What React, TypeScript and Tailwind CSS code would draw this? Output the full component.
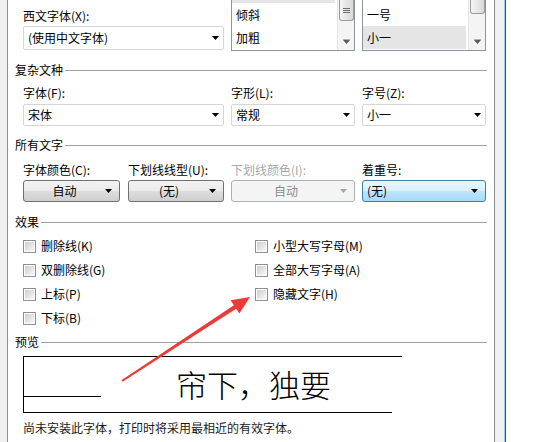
import React from "react";

function Caret({ color = "#000" }: { color?: string }) {
  return (
    <svg width="7" height="4" viewBox="0 0 7 4" className="shrink-0 block">
      <path d="M0 0H7L3.5 4Z" fill={color} />
    </svg>
  );
}

function Select({ text, tall }: { text: string; tall?: boolean }) {
  return (
    <div
      className={`${tall ? "h-[24px]" : "h-[22px]"} border border-[#d6d6d6] rounded-[2px] bg-white flex items-center justify-between pl-[4px] pr-[4px]`}
    >
      <span>{text}</span>
      <Caret />
    </div>
  );
}

function Header({ title }: { title: string }) {
  return (
    <div className="flex items-center h-[16px]">
      <span className="leading-[16px] text-black">{title}</span>
      <div className="flex-1 h-px bg-[#a0a0a0] ml-[2px]" />
    </div>
  );
}

function Check({ label }: { label: string }) {
  return (
    <div className="flex items-center h-[24px]">
      <div className="w-[13px] h-[13px] border border-[#8f8f8f] bg-white p-[1px] shrink-0">
        <div className="w-full h-full bg-linear-to-br from-[#cfcfcf] to-[#f7f7f7]" />
      </div>
      <span className="ml-[5px] leading-[16px]">{label}</span>
    </div>
  );
}

function Scrollbar({ thumb, grip }: { thumb: string; grip?: boolean }) {
  return (
    <div className="w-[17px] h-full bg-[#f4f4f4] border-l border-[#e6e6e6] flex flex-col items-center shrink-0">
      <div
        className={`${thumb} w-[15px] border border-t-0 border-[#9b9b9b] rounded-b-[3px] bg-linear-to-r from-[#f4f4f4] to-[#d9d9d9] flex flex-col items-center justify-center gap-[1px]`}
      >
        {grip && (
          <>
            <div className="w-[7px] h-px bg-[#6d6d6d]" />
            <div className="w-[7px] h-px bg-[#6d6d6d]" />
            <div className="w-[7px] h-px bg-[#6d6d6d]" />
          </>
        )}
      </div>
      <div className="flex-1" />
      <div className="h-[18px] flex items-center justify-center">
        <svg width="7" height="5" viewBox="0 0 7 5" className="block">
          <path d="M0 0H7V1H0Z" fill="#b0b0b0" />
          <path d="M0 1H7L3.5 5Z" fill="#5a5a5a" />
        </svg>
      </div>
    </div>
  );
}

function ListBox({
  items,
  selected,
  topSelected,
  thumb,
  grip,
}: {
  items: string[];
  selected: string;
  topSelected?: boolean;
  thumb: string;
  grip?: boolean;
}) {
  return (
    <div className="h-[51px] border-x border-b border-[#8f949c] flex overflow-hidden bg-white">
      <div className="flex-1 pr-[2px]">
        <div className={`h-[3px] ${topSelected ? "bg-[#e5e5e5]" : ""}`} />
        {items.map((it) => (
          <div
            key={it}
            className={`h-[23px] leading-[23px] pl-[4px] ${it === selected ? "bg-[#e5e5e5]" : ""}`}
          >
            {it}
          </div>
        ))}
      </div>
      <Scrollbar thumb={thumb} grip={grip} />
    </div>
  );
}

function DropButton({
  text,
  w,
  kind,
}: {
  text: string;
  w: string;
  kind: "normal" | "disabled" | "focus";
}) {
  if (kind === "disabled") {
    return (
      <div className={`${w} h-[22px] border border-[#adb2b5] rounded-[3px] bg-[#f4f4f4] flex items-center text-[#8a8a8a]`}>
        <span className="flex-1 text-center">{text}</span>
        <span className="mr-[7px]">
          <Caret color="#a6a6a6" />
        </span>
      </div>
    );
  }
  if (kind === "focus") {
    return (
      <div
        className={`${w} h-[22px] border border-[#3c7fb1] rounded-[3px] bg-[linear-gradient(#eaf6fd,#d9f0fc_50%,#bee6fd_50%,#a7d9f5)] flex items-center pl-[4px]`}
      >
        <span className="flex-1">{text}</span>
        <span className="mr-[7px]">
          <Caret />
        </span>
      </div>
    );
  }
  return (
    <div
      className={`${w} h-[22px] border border-[#707070] rounded-[3px] bg-[linear-gradient(#f2f2f2,#ebebeb_50%,#dddddd_50%,#cfcfcf)] flex items-center`}
    >
      <span className="flex-1 text-center">{text}</span>
      <span className="mr-[7px]">
        <Caret />
      </span>
    </div>
  );
}

export default function App() {
  return (
    <div className="relative w-[551px] h-[442px] overflow-hidden bg-white flex font-['Noto_Sans_CJK_SC','Noto_Sans',sans-serif] text-[12px] text-black">
      <div className="w-[7px] h-full bg-[#f0f0f0]" />
      <div className="w-px h-full bg-[#8e8f8f]" />

      <div className="w-[486px] h-full px-[7px] flex flex-col">
        {/* Row 1 */}
        <div className="pl-[8px] grid grid-cols-[201px_124px_124px] gap-x-[7px] h-[51px]">
          <div className="flex flex-col">
            <div className="mt-[8px] h-[16px] leading-[16px]">西文字体(X):</div>
            <div className="mt-[2px]">
              <Select text="(使用中文字体)" tall />
            </div>
          </div>
          <ListBox items={["倾斜", "加粗"]} selected="" topSelected thumb="h-[21px]" grip />
          <ListBox items={["一号", "小一"]} selected="小一" thumb="h-[14px]" />
        </div>

        {/* 复杂文种 */}
        <div className="mt-[11px]">
          <Header title="复杂文种" />
        </div>
        <div className="mt-[7px] pl-[8px] grid grid-cols-[201px_124px_124px] gap-x-[7px] h-[16px] leading-[16px]">
          <div>字体(F):</div>
          <div>字形(L):</div>
          <div>字号(Z):</div>
        </div>
        <div className="mt-[3px] pl-[8px] grid grid-cols-[201px_124px_124px] gap-x-[7px]">
          <Select text="宋体" />
          <Select text="常规" />
          <Select text="小一" />
        </div>

        {/* 所有文字 */}
        <div className="mt-[11px]">
          <Header title="所有文字" />
        </div>
        <div className="mt-[9px] pl-[8px] grid grid-cols-[201px_124px_124px] gap-x-[7px] h-[16px] leading-[16px]">
          <div className="flex gap-x-[8px]">
            <div className="w-[97px]">字体颜色(C):</div>
            <div>下划线线型(U):</div>
          </div>
          <div className="text-[#a8a8a8]">下划线颜色(I):</div>
          <div>着重号:</div>
        </div>
        <div className="mt-[2px] pl-[8px] grid grid-cols-[201px_124px_124px] gap-x-[7px]">
          <div className="flex gap-x-[8px]">
            <DropButton text="自动" w="w-[97px]" kind="normal" />
            <DropButton text="(无)" w="w-[96px]" kind="normal" />
          </div>
          <DropButton text="自动" w="w-[124px]" kind="disabled" />
          <DropButton text="(无)" w="w-[124px]" kind="focus" />
        </div>

        {/* 效果 */}
        <div className="mt-[12px]">
          <Header title="效果" />
        </div>
        <div className="mt-[4px] pl-[8px] grid grid-cols-[232px_1fr]">
          <div className="flex flex-col">
            <Check label="删除线(K)" />
            <Check label="双删除线(G)" />
            <Check label="上标(P)" />
            <Check label="下标(B)" />
          </div>
          <div className="flex flex-col">
            <Check label="小型大写字母(M)" />
            <Check label="全部大写字母(A)" />
            <Check label="隐藏文字(H)" />
          </div>
        </div>

        {/* 预览 */}
        <div className="mt-[4px]">
          <Header title="预览" />
        </div>
        <div className="mt-[6px] ml-[8px] w-[379px] h-[57px] border-t border-l border-black flex flex-col">
          <div className="flex-1 flex items-start">
            <div className="w-[77px] h-[40px] border-b border-black shrink-0" />
            <div className="ml-[75px] mt-[11px] text-[31px] leading-[31px] font-light whitespace-nowrap">
              帘下，独要
            </div>
          </div>
          <div className="h-px w-[369px] bg-black -ml-px" />
        </div>
        <div className="mt-[7px] pl-[8px] h-[16px] leading-[16px] text-[#1a1a1a] whitespace-nowrap">
          尚未安装此字体，打印时将采用最相近的有效字体。
        </div>
      </div>

      <div className="w-px h-full bg-[#8e8f8f]" />
      <div className="w-[9px] h-full bg-[#f0f0f0]" />
      <div className="w-px h-full bg-[#8fd3f5]" />
      <div className="w-px h-full bg-[#2e5378]" />
      <div className="flex-1 h-full bg-white" />

      <svg
        className="absolute inset-0 pointer-events-none"
        width="551"
        height="442"
        viewBox="0 0 551 442"
      >
        <polygon
          points="121.4,380.2 233.9,305.3 230.6,300.3 250,297 239.4,313.6 236.1,308.7 122.6,381.8"
          fill="#ec3a36"
        />
      </svg>
    </div>
  );
}
